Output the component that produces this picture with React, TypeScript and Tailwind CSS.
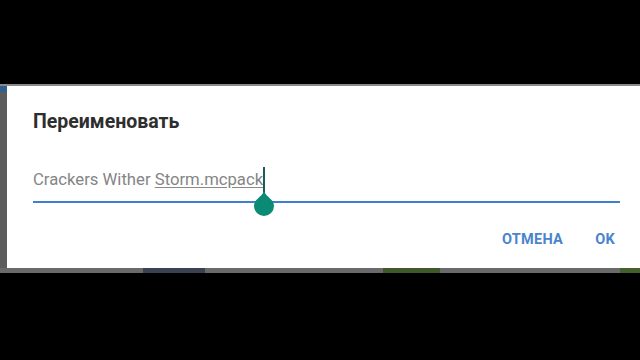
export default function App() {
  return (
    <div className="w-[640px] h-[360px] bg-black flex flex-col overflow-hidden" style={{ fontFamily: "Roboto, 'Noto Sans', sans-serif" }}>
      <div className="h-[84px] shrink-0" />
      <div className="h-[2px] shrink-0 bg-[#8a8a8a]" />
      <div className="h-[182px] shrink-0 flex">
        <div className="w-[7px] shrink-0 bg-[#5c5c5c] flex flex-col">
          <div className="h-[6px] bg-[#2f5f93]" />
        </div>
        <div className="flex-1 bg-white flex flex-col">
          <div className="pl-[26px] pt-[24px] text-[19.5px] leading-[24px] font-bold text-[#2e2e2e]">Переименовать</div>
          <div className="pl-[26px] pr-[20px] mt-[33px] relative">
            <div className="text-[16.7px] leading-[20px] text-[#858585] flex items-end">
              <span>Crackers Wither&nbsp;</span>
              <span className="underline decoration-[#8a8a8a] underline-offset-2">Storm.mcpack</span>
              <span className="relative inline-block w-[2px] h-[26px] bg-[#1c5a5a] -mb-[3px]">
                <svg className="absolute left-[-10px] top-[24px]" width="22" height="26" viewBox="0 0 22 26">
                  <path d="M11 0 C13 6 21 8 21 15 A10 10 0 0 1 1 15 C1 8 9 6 11 0 Z" fill="#0b8a76" />
                </svg>
              </span>
            </div>
            <div className="mt-[11px] h-[2px] bg-[#3f7fd0]" />
          </div>
          <div className="flex justify-end items-center gap-[32px] pr-[25px] mt-[26px] text-[14.5px] tracking-[0.3px] font-bold text-[#4a84cf]">
            <span>ОТМЕНА</span>
            <span>OK</span>
          </div>
        </div>
      </div>
      <div className="h-[5px] shrink-0 bg-[#6a6a6a] flex">
        <div className="w-[143px]" />
        <div className="w-[62px] bg-[#3a4150]" />
        <div className="w-[178px]" />
        <div className="w-[57px] bg-[#3f5a2a]" />
        <div className="w-[180px]" />
        <div className="flex-1 bg-[#44602c]" />
      </div>
    </div>
  );
}
